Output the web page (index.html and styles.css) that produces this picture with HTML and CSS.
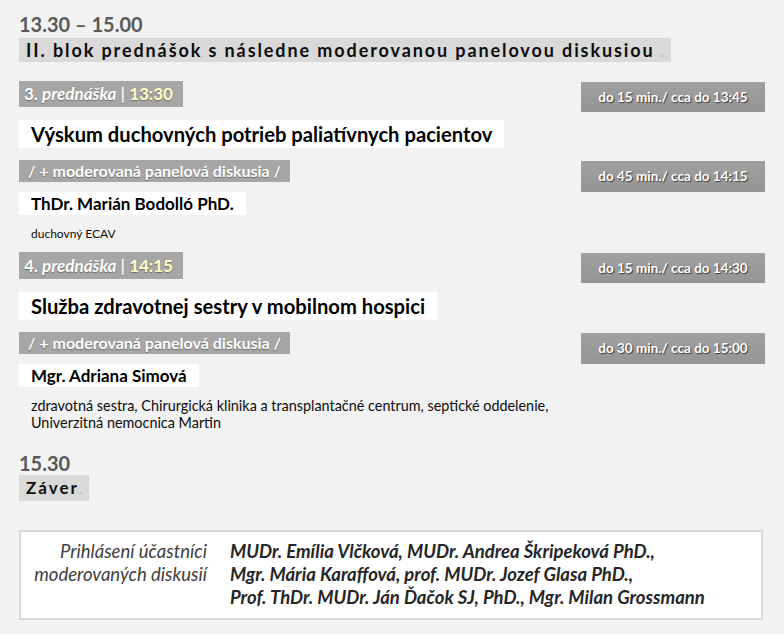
FILE: index.html
```html
<!DOCTYPE html>
<html lang="sk">
<head>
<meta charset="utf-8">
<title>Program</title>
<link rel="stylesheet" href="styles.css">
</head>
<body>
<main class="page">
  <div class="time">13.30 – 15.00</div>
  <div class="block-title">II. blok prednášok s následne moderovanou panelovou diskusiou <span class="dot">.</span></div>

  <section class="lecture">
    <div class="badge badge-first">do 15 min./ cca do 13:45</div>
    <div class="bar bar-num">3. <em>prednáška</em> | <span class="hour">13:30</span></div>
    <div class="title">Výskum duchovných potrieb paliatívnych pacientov</div>
    <div class="badge badge-disc">do 45 min./ cca do 14:15</div>
    <div class="bar bar-disc">/ + moderovaná panelová diskusia /</div>
    <div class="name">ThDr. Marián Bodolló PhD.</div>
    <p class="role">duchovný ECAV</p>
  </section>

  <section class="lecture">
    <div class="badge badge-first">do 15 min./ cca do 14:30</div>
    <div class="bar bar-num bar-num2">4. <em>prednáška</em> | <span class="hour">14:15</span></div>
    <div class="title">Služba zdravotnej sestry v mobilnom hospici</div>
    <div class="badge badge-disc">do 30 min./ cca do 15:00</div>
    <div class="bar bar-disc">/ + moderovaná panelová diskusia /</div>
    <div class="name">Mgr. Adriana Simová</div>
    <p class="role role2">zdravotná sestra, Chirurgická klinika a transplantačné centrum, septické oddelenie,<br>Univerzitná nemocnica Martin</p>
  </section>

  <div class="time time-end">15.30</div>
  <div class="block-title end">Záver<span class="dot">.</span></div>

  <div class="panel">
    <div class="panel-label">Prihlásení účastníci<br>moderovaných diskusií</div>
    <div class="panel-names">MUDr. Emília Vlčková, MUDr. Andrea Škripeková PhD.,<br>Mgr. Mária Karaffová, prof. MUDr. Jozef Glasa PhD.,<br>Prof. ThDr. MUDr. Ján Ďačok SJ, PhD., Mgr. Milan Grossmann</div>
  </div>
</main>
</body>
</html>
```

FILE: styles.css
```css
html, body {
  margin: 0;
  padding: 0;
  background: #f2f2f2;
}
body {
  font-family: Lato, "Open Sans", sans-serif;
  color: #000;
}
.page {
  padding: 12px 19px 0 19px;
  width: 746px;
}
.time {
  font-size: 20px;
  font-weight: 700;
  color: #595959;
  line-height: 24px;
  height: 24px;
}
.block-title {
  margin-top: 2px;
  width: fit-content;
  background: #d9d9d9;
  height: 24px;
  line-height: 24px;
  padding: 0 4px 0 7px;
  font-size: 18px;
  font-weight: 700;
  letter-spacing: 1.9px;
  color: #0d0d0d;
  white-space: nowrap;
}
.block-title .dot {
  color: #bfbfbf;
  font-weight: 400;
}
.lecture {
  margin-top: 19px;
}
.lecture + .lecture {
  margin-top: 11px;
}
.badge {
  float: right;
  clear: right;
  width: 184px;
  height: 30px;
  line-height: 30px;
  text-align: center;
  background: linear-gradient(#a0a0a0, #959595);
  color: #fff;
  font-size: 13.5px;
  font-weight: 700;
  text-shadow: 1px 1px 1px #3a3a3a;
  white-space: nowrap;
}
.badge-first {
  margin-top: 1px;
}
.badge-disc {
  margin-top: 13px;
  height: 31px;
  line-height: 31px;
}
.bar {
  width: fit-content;
  background: #a6a6a6;
  color: #fff;
  font-weight: 700;
  white-space: nowrap;
  text-shadow: 0 1px 1px rgba(0,0,0,0.35);
}
.bar-num {
  height: 26px;
  line-height: 26px;
  font-size: 17px;
  padding: 0 10px 0 5px;
}
.bar-num2 {
  height: 27px;
  line-height: 27px;
}
.bar-num em {
  font-style: italic;
}
.hour {
  color: #ffffc4;
}
.bar-disc {
  margin-top: 12px;
  height: 22px;
  line-height: 22px;
  font-size: 16px;
  padding: 0 9px 0 9px;
}
.title {
  margin-top: 13px;
  width: fit-content;
  background: #fff;
  height: 28px;
  line-height: 28px;
  padding: 0 12px 0 12px;
  font-size: 20.2px;
  font-weight: 700;
  white-space: nowrap;
}
.name {
  margin-top: 10px;
  width: fit-content;
  background: #fff;
  height: 23px;
  line-height: 23px;
  padding: 0 12px 0 12px;
  font-size: 17px;
  font-weight: 700;
  white-space: nowrap;
}
.role {
  margin: 12px 0 0 12px;
  font-size: 12px;
  line-height: 14px;
  color: #0d0d0d;
}
.role2 {
  font-size: 14.4px;
  line-height: 17px;
  margin-top: 10px;
}
.time-end {
  margin-top: 20px;
}
.block-title.end {
  margin-top: 0;
  height: 26px;
  line-height: 26px;
  font-size: 17px;
  letter-spacing: 2px;
  padding: 0 4px 0 7px;
}
.panel {
  margin-top: 29px;
  width: 740px;
  background: #fff;
  border: 2px solid #d9d9d9;
  display: flex;
  padding: 8px 0 9px 0;
  font-size: 18.5px;
  line-height: 23px;
  font-style: italic;
}
.panel-label {
  width: 186px;
  text-align: right;
  color: #404040;
}
.panel-names {
  margin-left: 23px;
  font-weight: 700;
  color: #262626;
}
```
